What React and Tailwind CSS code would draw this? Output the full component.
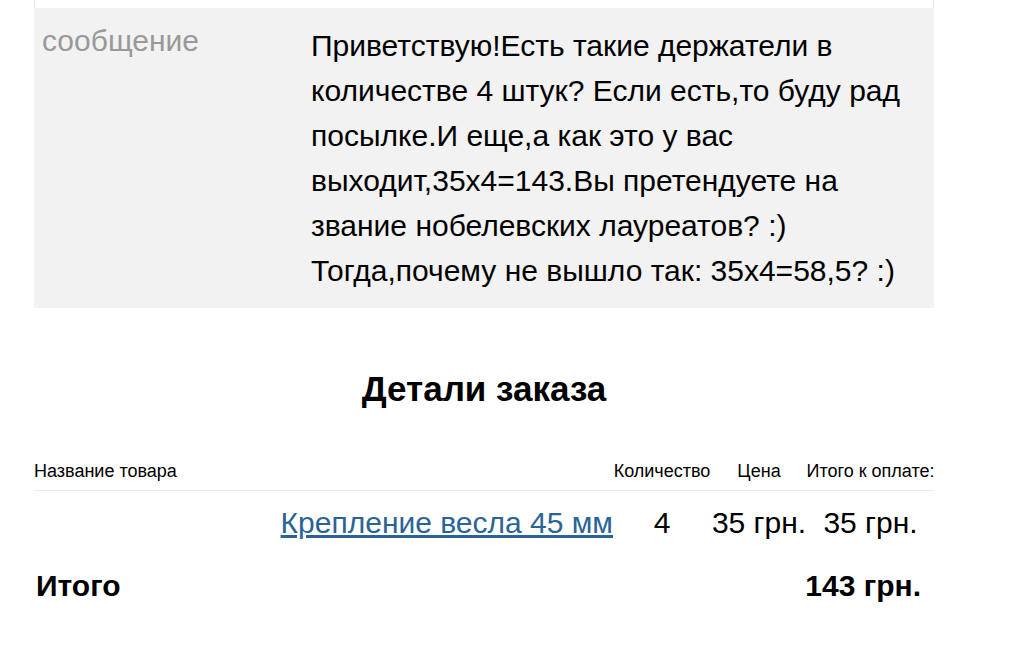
export default function App() {
  const font = { fontFamily: '"Liberation Sans", Arial, sans-serif' };
  return (
    <div className="min-h-[651px] bg-white text-black" style={font}>
      <div className="ml-[34px] w-[900px]">
        <div className="h-[8px] border-x border-[#e6e6e6]" />
        <div className="grid grid-cols-[269px_1fr] bg-[#f2f2f2] py-[15px]">
          <div className="px-2 text-[30px] leading-[35px] text-[#999]">сообщение</div>
          <div className="px-2 text-[30px] leading-[45px] text-black">
            Приветствую!Есть такие держатели в количестве 4 штук? Если есть,то буду рад посылке.И еще,а как это у вас выходит,35x4=143.Вы претендуете на звание нобелевских лауреатов? :) Тогда,почему не вышло так: 35x4=58,5? :)
          </div>
        </div>
        <h2 className="mt-[60px] text-center text-[35px] font-bold leading-[42px]">Детали заказа</h2>
        <div className="mt-[50px] grid grid-cols-[1fr_98px_96px_127px] border-b border-[#eeeeee] pb-[8px] text-[18px] leading-[22px] whitespace-nowrap">
          <div>Название товара</div>
          <div className="text-center">Количество</div>
          <div className="text-center">Цена</div>
          <div className="flex justify-center">Итого к оплате:</div>
        </div>
        <div className="grid grid-cols-[1fr_98px_96px_127px] pt-[14px] text-[30px] leading-[36px]">
          <div className="text-right">
            <a href="#" className="text-[#2a6496] underline">Крепление весла 45 мм</a>
          </div>
          <div className="text-center">4</div>
          <div className="text-center">35 грн.</div>
          <div className="text-center">35 грн.</div>
        </div>
        <div className="mt-[27px] flex justify-between pl-[2px] pr-[13px] text-[30px] font-bold leading-[36px]">
          <div>Итого</div>
          <div>143 грн.</div>
        </div>
      </div>
    </div>
  );
}
